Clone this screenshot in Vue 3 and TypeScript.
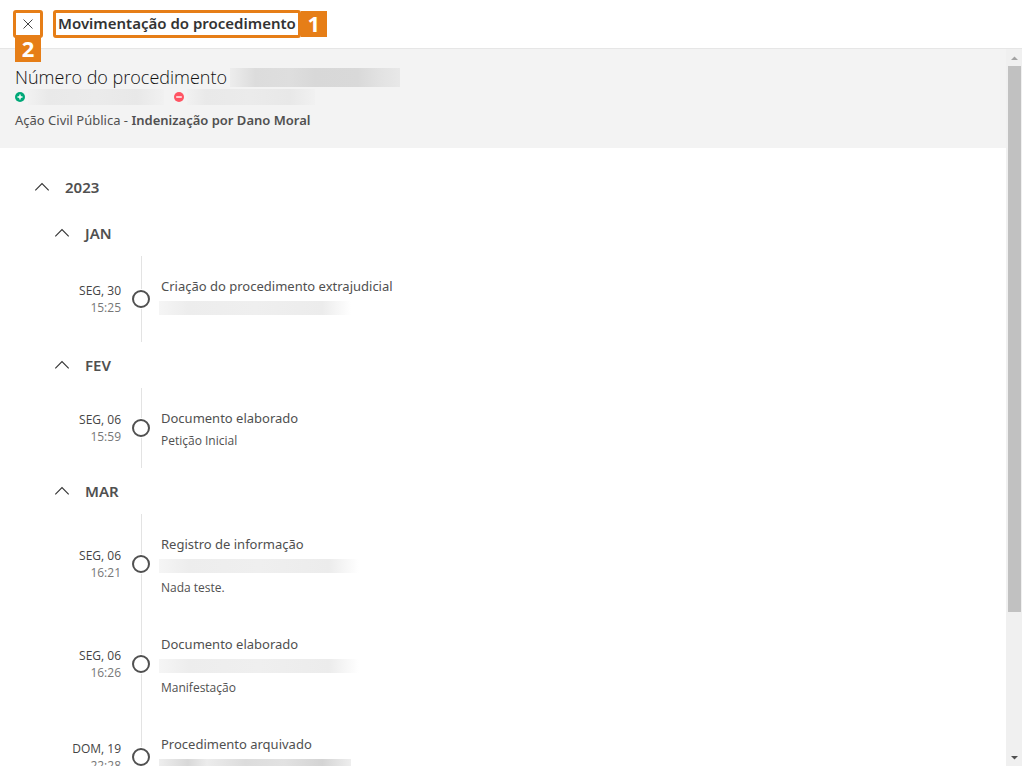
<script setup lang="ts">
import { reactive } from 'vue'

interface Entry {
  date: string
  time: string
  title: string
  hidden?: 'short' | 'long' | 'dark'
  detail?: string
}
interface Month {
  name: string
  entries: Entry[]
}

const year = '2023'
const months: Month[] = [
  {
    name: 'JAN',
    entries: [{ date: 'SEG, 30', time: '15:25', title: 'Criação do procedimento extrajudicial', hidden: 'short' }],
  },
  {
    name: 'FEV',
    entries: [{ date: 'SEG, 06', time: '15:59', title: 'Documento elaborado', detail: 'Petição Inicial' }],
  },
  {
    name: 'MAR',
    entries: [
      { date: 'SEG, 06', time: '16:21', title: 'Registro de informação', hidden: 'long', detail: 'Nada teste.' },
      { date: 'SEG, 06', time: '16:26', title: 'Documento elaborado', hidden: 'long', detail: 'Manifestação' },
      { date: 'DOM, 19', time: '22:28', title: 'Procedimento arquivado', hidden: 'dark' },
    ],
  },
]

const closed = reactive<Record<string, boolean>>({})
const toggle = (key: string) => {
  closed[key] = !closed[key]
}
</script>

<template>
  <div class="panel">
    <header class="bar">
      <div class="close-mark">
        <button class="close" type="button" aria-label="Fechar">
          <svg width="12" height="12" viewBox="0 0 12 12"><path d="M1.5 1.5 10.5 10.5M10.5 1.5 1.5 10.5" /></svg>
        </button>
        <span class="badge below">2</span>
      </div>
      <h1 class="title">Movimentação do procedimento</h1>
      <span class="badge">1</span>
    </header>

    <div class="body">
      <main class="content">
        <section class="summary">
          <h2 class="number">Número do procedimento <span class="blur blur-number"></span></h2>
          <div class="parties">
            <svg width="10" height="10" viewBox="0 0 10 10">
              <circle cx="5" cy="5" r="5" fill="#00a878" /><path d="M5 2.5V7.5M2.5 5H7.5" stroke="#fff" stroke-width="1.4" />
            </svg>
            <span class="blur blur-party"></span>
            <svg width="10" height="10" viewBox="0 0 10 10">
              <circle cx="5" cy="5" r="5" fill="#ff5463" /><path d="M2.2 5H7.8" stroke="#fff" stroke-width="1.4" />
            </svg>
            <span class="blur blur-party"></span>
          </div>
          <p class="subject">Ação Civil Pública - <strong>Indenização por Dano Moral</strong></p>
        </section>

        <section class="timeline">
          <button class="fold" type="button" :aria-expanded="!closed[year]" @click="toggle(year)">
            <svg :class="{ flipped: closed[year] }" width="16" height="10" viewBox="0 0 16 10"><path d="M1.3 8.3 8 1.6 14.7 8.3" /></svg>
            <span>{{ year }}</span>
          </button>
          <template v-if="!closed[year]">
            <section v-for="month in months" :key="month.name">
              <button class="fold month" type="button" :aria-expanded="!closed[month.name]" @click="toggle(month.name)">
                <svg :class="{ flipped: closed[month.name] }" width="16" height="10" viewBox="0 0 16 10"><path d="M1.3 8.3 8 1.6 14.7 8.3" /></svg>
                <span>{{ month.name }}</span>
              </button>
              <ol v-if="!closed[month.name]" class="entries">
                <li v-for="entry in month.entries" :key="entry.time" class="entry">
                  <div class="when">
                    <div>{{ entry.date }}</div>
                    <div class="time">{{ entry.time }}</div>
                  </div>
                  <div class="rail"><i class="dot"></i></div>
                  <div class="what">
                    <h3>{{ entry.title }}</h3>
                    <div v-if="entry.hidden" class="secret"><span class="blur" :class="entry.hidden"></span></div>
                    <p v-if="entry.detail">{{ entry.detail }}</p>
                  </div>
                </li>
              </ol>
            </section>
          </template>
        </section>
      </main>
      <div class="scroll" aria-hidden="true">
        <svg width="16" height="17" viewBox="0 0 16 17"><path d="M5 11H12L8.5 7.5Z" fill="#a3a3a3" /></svg>
        <div class="track"><div class="thumb"></div></div>
        <svg width="16" height="17" viewBox="0 0 16 17"><path d="M5 7H12L8.5 10.5Z" fill="#505050" /></svg>
      </div>
    </div>
  </div>
</template>

<style>
body {
  background: #fff;
}
</style>

<style scoped>
.panel {
  display: flex;
  flex-direction: column;
  height: 100vh;
  overflow: hidden;
  color: #505050;
  font-family: "Noto Sans", "Open Sans", sans-serif;
}
h1, h2, h3, p, ol {
  margin: 0;
  padding: 0;
  font-weight: 400;
}
button {
  font: inherit;
  color: inherit;
  background: none;
  border: 0;
  padding: 0;
  cursor: pointer;
}
svg {
  display: block;
  flex: none;
}
.bar {
  display: flex;
  align-items: center;
  flex: none;
  height: 48px;
  padding-left: 13px;
  border-bottom: 1px solid #e6e6e6;
}
.close-mark {
  position: relative;
  margin-right: 10px;
}
.close {
  display: flex;
  align-items: center;
  justify-content: center;
  box-sizing: border-box;
  width: 30px;
  height: 28px;
  border: 3px solid #e67e17;
  border-radius: 3px;
  background: #fff;
}
.close path {
  fill: none;
  stroke: #444;
  stroke-width: 1;
}
.title {
  box-sizing: border-box;
  height: 28px;
  padding: 0 2px;
  border: 3px solid #e67e17;
  border-radius: 3px;
  color: #333;
  font-size: 15px;
  font-weight: 600;
  line-height: 21px;
}
.badge {
  width: 26px;
  height: 26px;
  background: #e67e17;
  color: #fff;
  font-family: "Open Sans", "Noto Sans", sans-serif;
  font-size: 22px;
  font-weight: 700;
  line-height: 25px;
  text-align: center;
}
.below {
  position: absolute;
  top: 26px;
  left: 2px;
}
.body {
  display: flex;
  flex: 1;
  min-height: 0;
}
.content {
  flex: 1;
  min-width: 0;
  overflow: hidden;
}
.summary {
  padding: 16px 15px 18px;
  background: #f3f3f3;
}
.number {
  display: flex;
  align-items: center;
  gap: 3px;
  color: #111;
  font-family: "Open Sans", "Noto Sans", sans-serif;
  font-size: 18px;
  font-weight: 300;
  line-height: 25px;
}
.parties {
  display: flex;
  align-items: center;
  height: 18px;
  margin-top: -2px;
}
.subject {
  margin-top: 4px;
  font-size: 13px;
  line-height: 20px;
}
.subject strong {
  font-weight: 600;
}
.blur {
  display: block;
  flex: none;
}
.blur-number {
  width: 170px;
  height: 19px;
  background: linear-gradient(90deg, #ededed, #dcdcdc 15%, #dedede 35%, #d8d8d8 50%, #d9d9d9 75%, #e2e2e2 88%, #e8e8e8);
}
.blur-party {
  width: 136px;
  height: 16px;
  margin: 0 10px 0 3px;
  background: linear-gradient(90deg, #f1f1f1, #e9e9e9 15%, #ebebeb 50%, #e8e8e8 80%, #f1f1f1);
}
.blur-party:last-child {
  width: 128px;
}
.timeline {
  padding-top: 16px;
}
.fold {
  display: flex;
  align-items: center;
  gap: 15px;
  height: 46px;
  padding-left: 34px;
  font-size: 15px;
  font-weight: 600;
}
.month {
  padding-left: 54px;
}
.fold path {
  fill: none;
  stroke: #333;
  stroke-width: 1.1;
}
.flipped {
  transform: rotate(180deg);
}
.entries {
  list-style: none;
}
.entry {
  display: grid;
  grid-template-columns: 121px 40px 1fr;
  min-height: 80px;
}
.entry:has(.blur) {
  min-height: 86px;
}
.when {
  align-self: center;
  color: #444;
  font-family: "Open Sans", "Noto Sans", sans-serif;
  font-size: 12px;
  line-height: 17px;
  text-align: right;
}
.time {
  color: #777;
}
.rail {
  display: flex;
  align-items: center;
  justify-content: center;
  background: linear-gradient(#e3e3e3, #e3e3e3) 20px 0 / 1px 100% no-repeat;
}
.dot {
  box-sizing: border-box;
  width: 18px;
  height: 18px;
  border: 2px solid #505050;
  border-radius: 50%;
  background: #fff;
  box-shadow: 0 0 0 1px #fff;
}
.what {
  padding: 20px 0 16px;
}
h3 {
  margin-bottom: 3px;
  font-size: 13px;
  line-height: 20px;
}
.what p {
  font-family: "Open Sans", "Noto Sans", sans-serif;
  font-size: 12px;
  line-height: 20px;
}
.secret {
  height: 21px;
  padding-top: 2px;
  margin-left: -2px;
  box-sizing: border-box;
}
.short,
.long {
  width: 192px;
  height: 14px;
  background: linear-gradient(90deg, #f5f5f5, #ededed 15%, #efefef 50%, #ececec 85%, #fff);
}
.long {
  width: 200px;
}
.dark {
  width: 192px;
  height: 14px;
  background: linear-gradient(90deg, #eee, #d8d8d8 15%, #ececec 25%, #dcdcdc 45%, #e2e2e2 65%, #d4d4d4 85%, #eee);
}
.scroll {
  display: flex;
  flex-direction: column;
  flex: none;
  width: 16px;
  background: #f0f0f0;
}
.track {
  flex: 1;
  padding: 0 1px 0 2px;
}
.thumb {
  height: 80%;
  background: #c1c1c1;
}
</style>
